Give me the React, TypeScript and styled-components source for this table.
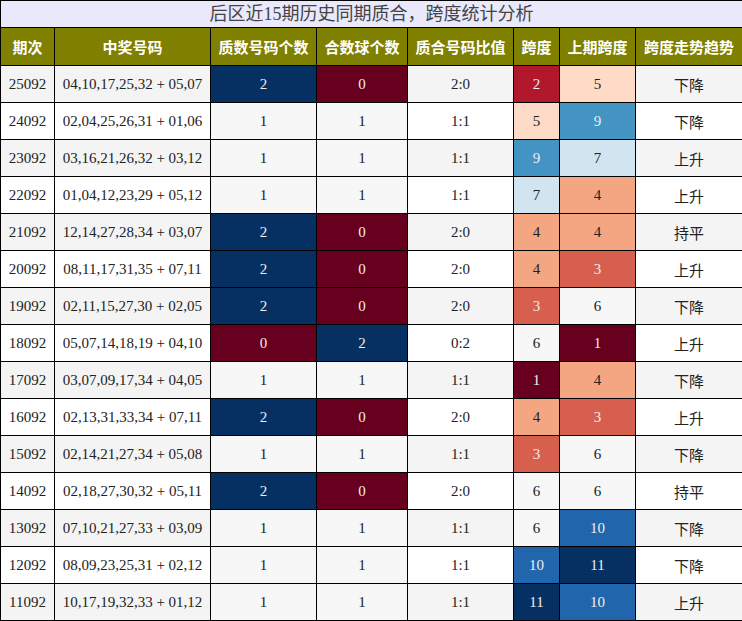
import React from "react";
import styled, { createGlobalStyle } from "styled-components";

const Global = createGlobalStyle`
  html, body { margin: 0; padding: 0; background: #fff; }
`;

const Table = styled.table`
  width: 742px;
  table-layout: fixed;
  border-collapse: collapse;
  font-family: "Liberation Serif", "Noto Sans CJK SC", serif;
`;

const TitleCell = styled.th`
  height: 26px;
  padding: 0;
  border: 1px solid #000;
  background: #e9e9fb;
  color: #444;
  font-weight: normal;
  font-size: 18px;
  line-height: 26px;
  text-align: center;
`;

const HeadCell = styled.th`
  height: 37px;
  padding: 0;
  border: 1px solid #000;
  background: #808000;
  color: #fff;
  font-family: "Noto Sans CJK SC", sans-serif;
  font-weight: bold;
  font-size: 15px;
  text-align: center;
  white-space: nowrap;
`;

const Row = styled.tr<{ $odd: boolean }>`
  background: ${(p) => (p.$odd ? "#f4f4f4" : "#ffffff")};
`;

const Cell = styled.td<{ $bg?: string; $light?: boolean; $cjk?: boolean }>`
  height: 36px;
  padding: 0;
  border: 1px solid #000;
  text-align: center;
  font-size: 15px;
  font-family: ${(p) =>
    p.$cjk ? `"Noto Sans CJK SC", sans-serif` : `"Liberation Serif", serif`};
  color: ${(p) => (p.$light ? "#eeeeee" : "#222")};
  background: ${(p) => p.$bg ?? "transparent"};
  white-space: nowrap;
`;

const spanColors: Record<number, string> = {
  1: "#67001f",
  2: "#b2182b",
  3: "#d6604d",
  4: "#f4a582",
  5: "#fddbc7",
  6: "#f7f7f7",
  7: "#d1e5f0",
  8: "#92c5de",
  9: "#4393c3",
  10: "#2166ac",
  11: "#053061",
};
const spanLight = (v: number) => v <= 3 || v >= 9;

const countColors: Record<number, string> = {
  0: "#67001f",
  1: "#f7f7f7",
  2: "#053061",
};

type R = [string, string, number, number, string, number, number, string];
const rows: R[] = [
  ["25092", "04,10,17,25,32 + 05,07", 2, 0, "2:0", 2, 5, "下降"],
  ["24092", "02,04,25,26,31 + 01,06", 1, 1, "1:1", 5, 9, "下降"],
  ["23092", "03,16,21,26,32 + 03,12", 1, 1, "1:1", 9, 7, "上升"],
  ["22092", "01,04,12,23,29 + 05,12", 1, 1, "1:1", 7, 4, "上升"],
  ["21092", "12,14,27,28,34 + 03,07", 2, 0, "2:0", 4, 4, "持平"],
  ["20092", "08,11,17,31,35 + 07,11", 2, 0, "2:0", 4, 3, "上升"],
  ["19092", "02,11,15,27,30 + 02,05", 2, 0, "2:0", 3, 6, "下降"],
  ["18092", "05,07,14,18,19 + 04,10", 0, 2, "0:2", 6, 1, "上升"],
  ["17092", "03,07,09,17,34 + 04,05", 1, 1, "1:1", 1, 4, "下降"],
  ["16092", "02,13,31,33,34 + 07,11", 2, 0, "2:0", 4, 3, "上升"],
  ["15092", "02,14,21,27,34 + 05,08", 1, 1, "1:1", 3, 6, "下降"],
  ["14092", "02,18,27,30,32 + 05,11", 2, 0, "2:0", 6, 6, "持平"],
  ["13092", "07,10,21,27,33 + 03,09", 1, 1, "1:1", 6, 10, "下降"],
  ["12092", "08,09,23,25,31 + 02,12", 1, 1, "1:1", 10, 11, "下降"],
  ["11092", "10,17,19,32,33 + 01,12", 1, 1, "1:1", 11, 10, "上升"],
];

const widths = [54, 156, 106, 91, 106, 46, 76, 107];
const heads = ["期次", "中奖号码", "质数号码个数", "合数球个数", "质合号码比值", "跨度", "上期跨度", "跨度走势趋势"];

export default function App() {
  return (
    <>
      <Global />
      <Table>
        <colgroup>
          {widths.map((w, i) => (
            <col key={i} style={{ width: w }} />
          ))}
        </colgroup>
        <thead>
          <tr>
            <TitleCell colSpan={8}>后区近15期历史同期质合，跨度统计分析</TitleCell>
          </tr>
          <tr>
            {heads.map((h) => (
              <HeadCell key={h}>{h}</HeadCell>
            ))}
          </tr>
        </thead>
        <tbody>
          {rows.map((r, i) => (
            <Row key={r[0]} $odd={i % 2 === 0}>
              <Cell>{r[0]}</Cell>
              <Cell>{r[1]}</Cell>
              <Cell $bg={countColors[r[2]]} $light={r[2] !== 1}>{r[2]}</Cell>
              <Cell $bg={countColors[r[3]]} $light={r[3] !== 1}>{r[3]}</Cell>
              <Cell>{r[4]}</Cell>
              <Cell $bg={spanColors[r[5]]} $light={spanLight(r[5])}>{r[5]}</Cell>
              <Cell $bg={spanColors[r[6]]} $light={spanLight(r[6])}>{r[6]}</Cell>
              <Cell $cjk>{r[7]}</Cell>
            </Row>
          ))}
        </tbody>
      </Table>
    </>
  );
}
